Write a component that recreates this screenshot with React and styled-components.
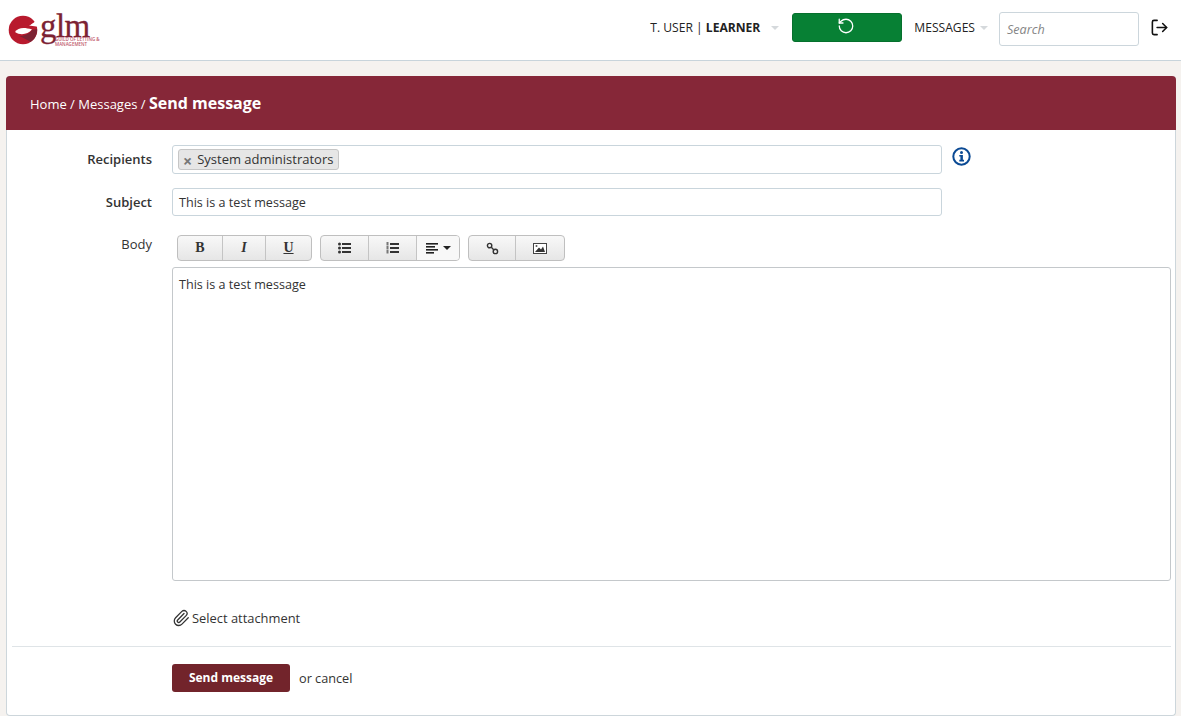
import React from 'react';
import styled, { createGlobalStyle } from 'styled-components';
import { RotateCcw, LogOut, Paperclip } from 'lucide-react';

const GlobalStyle = createGlobalStyle`
  html, body { margin: 0; padding: 0; height: 716px; overflow: hidden; background: #f5f2ef; }
  body { font-family: "Open Sans", "Liberation Sans", sans-serif; font-size: 13px; color: #333; }
`;

const Header = styled.header`
  height: 60px;
  box-sizing: content-box;
  background: #fff;
  border-bottom: 1px solid #c8d4db;
  display: flex;
  align-items: center;
  padding-right: 12px;
`;

const Logo = styled.div`
  display: flex;
  align-items: flex-start;
  margin-left: 8px;
  width: 92px;
  height: 30px;
`;

const LogoWords = styled.div`
  display: flex;
  flex-direction: column;
  margin-left: 2px;
  margin-top: -1px;
`;

const LogoName = styled.span`
  font-family: "Liberation Serif", serif;
  font-size: 33px;
  line-height: 24px;
  height: 24px;
  letter-spacing: -0.6px;
  font-weight: 400;
  -webkit-text-stroke: 0.3px #7c2233;
  color: #7c2233;
`;

const LogoSub = styled.span`
  font-size: 4.5px;
  line-height: 4.5px;
  white-space: pre;
  color: #c0586c;
  margin-left: 15px;
  font-weight: 600;
  margin-top: -1px;
`;

const HeaderRight = styled.div`
  margin-left: auto;
  display: flex;
  align-items: center;
  padding-bottom: 6px;
`;

const UserName = styled.span`
  font-size: 12.1px;
  color: #222;
  white-space: pre;
  & b { font-weight: 700; }
`;

const Caret = styled.span`
  width: 0;
  height: 0;
  border-left: 4px solid transparent;
  border-right: 4px solid transparent;
  border-top: 4px solid #d5d9dc;
  margin-left: ${p => p.$left}px;
  margin-top: 2px;
`;

const SyncButton = styled.div`
  width: 110px;
  height: 29px;
  margin-left: 13px;
  box-sizing: border-box;
  background: #078034;
  border: 1px solid #06702d;
  border-radius: 3px;
  display: flex;
  align-items: center;
  justify-content: center;
  color: #fff;
  & svg { margin-top: -2px; margin-right: 2px; }
`;

const MessagesLink = styled.span`
  font-size: 12.1px;
  color: #222;
  margin-left: 12px;
`;

const SearchBox = styled.div`
  width: 140px;
  height: 34px;
  box-sizing: border-box;
  margin-left: 11px;
  margin-top: 3px;
  border: 1px solid #ccd6dc;
  border-radius: 3px;
  padding: 8px 7px 7px;
  font-size: 12.6px;
  line-height: 17px;
  font-style: italic;
  color: #858585;
`;

const ExitIcon = styled(LogOut)`
  margin-left: 11px;
  color: #111;
`;

const Panel = styled.main`
  margin: 15px 5px 0 6px;
  height: 640px;
  box-sizing: border-box;
  background: #fff;
  border: 1px solid #cdd6db;
  border-top: none;
  border-radius: 4px;
`;

const TitleBar = styled.div`
  height: 54px;
  background: #862738;
  margin: 0 -1px;
  padding: 1px 0 0 24px;
  box-sizing: border-box;
  border-radius: 4px 4px 0 0;
  display: flex;
  align-items: center;
  color: #fff;
  font-size: 13px;
  white-space: pre;
  & strong { font-size: 16px; font-weight: 700; margin-bottom: 2px; }
`;

const Form = styled.div`
  padding: 15px 4px 0 5px;
`;

const Row = styled.div`
  display: flex;
  align-items: flex-start;
  margin-bottom: ${p => p.$gap}px;
`;

const Label = styled.label`
  width: 140px;
  text-align: right;
  margin-right: 20px;
  flex-shrink: 0;
  font-size: 13px;
  line-height: 18px;
  padding-top: ${p => p.$top}px;
  font-weight: ${p => (p.$bold ? 600 : 400)};
  color: #333;
`;

const Field = styled.div`
  width: 770px;
  height: ${p => p.$height}px;
  box-sizing: border-box;
  border: 1px solid #c9d5dc;
  border-radius: 3px;
  background: #fff;
  padding: 0 ${p => p.$pad}px;
  display: flex;
  align-items: center;
  font-size: 12.6px;
  color: #333;
`;

const Tag = styled.span`
  height: 21px;
  box-sizing: border-box;
  display: inline-flex;
  align-items: center;
  background: #e6e6e6;
  border: 1px solid #c6c6c6;
  border-radius: 3px;
  padding: 0 5px 2px 4px;
  font-size: 13px;
  color: #333;
`;

const TagClose = styled.span`
  font-size: 16px;
  font-weight: 700;
  color: #777;
  margin-right: 5px;
  line-height: 12px;
  margin-top: 4px;
`;

const InfoIcon = styled.svg`
  margin: 2px 0 0 10px;
`;

const BodyColumn = styled.div`
  flex: 1;
  min-width: 0;
`;

const Toolbar = styled.div`
  display: flex;
  gap: 8px;
  margin: 5px 0 6px 5px;
`;

const ToolGroup = styled.div`
  display: flex;
  height: 26px;
  box-sizing: border-box;
  border: 1px solid #bfbfbf;
  border-radius: 4px;
  background: linear-gradient(#f8f8f8, #e6e6e6);
  overflow: hidden;
`;

const ToolButton = styled.div`
  width: ${p => p.$width}px;
  display: flex;
  align-items: center;
  justify-content: center;
  color: #333;
  font-family: "Liberation Serif", serif;
  font-size: 14px;
  background: ${p => (p.$light ? '#f8f8f8' : 'transparent')};
  & + & { border-left: 1px solid #c4c4c4; }
`;

const ToolCaret = styled.span`
  width: 0;
  height: 0;
  border-left: 4px solid transparent;
  border-right: 4px solid transparent;
  border-top: 4px solid #222;
  margin-left: 4px;
`;

const Editor = styled.div`
  height: 314px;
  box-sizing: border-box;
  border: 1px solid #c4c8cb;
  border-radius: 3px;
  padding: 8px 6px;
  font-size: 12.6px;
  line-height: 18px;
  color: #333;
`;

const Attachment = styled.div`
  display: flex;
  align-items: center;
  margin: 27px 0 0 160px;
  height: 20px;
  font-size: 12.9px;
  color: #333;
  & svg { margin-right: 2px; }
`;

const Divider = styled.hr`
  border: none;
  border-top: 1px solid #dfe4e7;
  margin: 18px 0 17px 0;
`;

const Actions = styled.div`
  display: flex;
  align-items: center;
  margin-left: 160px;
`;

const SendButton = styled.div`
  width: 118px;
  height: 28px;
  background: #72242b;
  border-radius: 3px;
  color: #fff;
  font-size: 12px;
  font-weight: 700;
  display: flex;
  align-items: center;
  justify-content: center;
  padding-bottom: 1px;
  box-sizing: border-box;
`;

const CancelLink = styled.span`
  margin-left: 9px;
  font-size: 12.7px;
  color: #333;
`;

const LogoMark = () => (
  <svg width="30" height="30" viewBox="0 0 30 30">
    <circle cx="15" cy="15" r="14.3" fill="#b81a2e" />
    <path d="M21 10.5 L30.5 4.5 L31 12 Z" fill="#fff" />
    <path d="M19 3.5 C21.5 4 24 5 26 7 L21.5 10.5 C20 8.5 19 6 19 3.5 Z" fill="#b81a2e" />
    <path d="M7 17 C10 12.5 16 12 24 14.5 C20 19 13 21 7 17 Z" fill="#fff" />
    <path d="M11 21 C16 21 21 19 24 15 L29 14 C29.5 19 27 24 22.5 27 C19 24.5 15 22.5 11 21 Z" fill="#7c2233" />
  </svg>
);

const ListIcon = ({ numbered }) => (
  <svg width="13" height="12" viewBox="0 0 13 12" fill="#333">
    {[1, 5, 9].map(y => (
      <React.Fragment key={y}>
        <rect x="4" y={y} width="9" height="2" />
        {numbered
          ? <rect x="0.5" y={y - 1} width="2" height="3.5" fill="#777" />
          : <circle cx="1.5" cy={y + 1} r="1.5" />}
      </React.Fragment>
    ))}
  </svg>
);

const AlignIcon = () => (
  <svg width="13" height="11" viewBox="0 0 13 11" fill="#222">
    <rect y="0" width="12" height="1.6" />
    <rect y="3" width="9" height="1.6" />
    <rect y="6" width="12" height="1.6" />
    <rect y="9" width="8" height="1.6" />
  </svg>
);

const LinkIcon = () => (
  <svg width="13" height="13" viewBox="0 0 13 13" fill="none" stroke="#333" strokeWidth="1.4">
    <circle cx="3.6" cy="3.6" r="2.2" />
    <circle cx="9.4" cy="9.4" r="2.2" />
    <path d="M5.3 5.3 L7.7 7.7" />
  </svg>
);

const ImageIcon = () => (
  <svg width="14" height="11" viewBox="0 0 14 11">
    <rect x="0.5" y="0.5" width="13" height="10" fill="#fff" stroke="#444" />
    <path d="M2 9 L6 4.5 L8 6.5 L10 3.5 L12 9 Z" fill="#333" />
    <circle cx="3.5" cy="3" r="1" fill="#555" />
  </svg>
);

export default function App() {
  return (
    <>
      <GlobalStyle />
      <Header>
        <Logo>
          <LogoMark />
          <LogoWords>
            <LogoName>glm</LogoName>
            <LogoSub>{'GUILD OF LETTING &\nMANAGEMENT'}</LogoSub>
          </LogoWords>
        </Logo>
        <HeaderRight>
          <UserName>T. USER | <b>LEARNER</b></UserName>
          <Caret $left={11} />
          <SyncButton><RotateCcw size={18} strokeWidth={1.7} /></SyncButton>
          <MessagesLink>MESSAGES</MessagesLink>
          <Caret $left={5} />
          <SearchBox>Search</SearchBox>
          <ExitIcon size={19} strokeWidth={2} />
        </HeaderRight>
      </Header>
      <Panel>
        <TitleBar>Home / Messages / <strong>Send message</strong></TitleBar>
        <Form>
          <Row $gap={14}>
            <Label $bold $top={5}>Recipients</Label>
            <Field $height={29} $pad={5}>
              <Tag><TagClose>×</TagClose>System administrators</Tag>
            </Field>
            <InfoIcon width="19" height="19" viewBox="0 0 19 19">
              <circle cx="9.5" cy="9.5" r="8.2" fill="none" stroke="#0b4a94" strokeWidth="2" />
              <circle cx="9.5" cy="5.6" r="1.5" fill="#0b4a94" />
              <path d="M7.3 8 H10.9 V12.8 H12 V14.4 H7.3 V12.8 H8.4 V9.6 H7.3 Z" fill="#0b4a94" />
            </InfoIcon>
          </Row>
          <Row $gap={14}>
            <Label $bold $top={5}>Subject</Label>
            <Field $height={28} $pad={6}>This is a test message</Field>
          </Row>
          <Row $gap={0}>
            <Label $top={5}>Body</Label>
            <BodyColumn>
              <Toolbar>
                <ToolGroup>
                  <ToolButton $width={44}><b>B</b></ToolButton>
                  <ToolButton $width={42}><b><i>I</i></b></ToolButton>
                  <ToolButton $width={45}><b><u>U</u></b></ToolButton>
                </ToolGroup>
                <ToolGroup>
                  <ToolButton $width={47}><ListIcon /></ToolButton>
                  <ToolButton $width={47}><ListIcon numbered /></ToolButton>
                  <ToolButton $width={42} $light><AlignIcon /><ToolCaret /></ToolButton>
                </ToolGroup>
                <ToolGroup>
                  <ToolButton $width={46}><LinkIcon /></ToolButton>
                  <ToolButton $width={48}><ImageIcon /></ToolButton>
                </ToolGroup>
              </Toolbar>
              <Editor>This is a test message</Editor>
            </BodyColumn>
          </Row>
          <Attachment><Paperclip size={18} strokeWidth={1.7} />Select attachment</Attachment>
          <Divider />
          <Actions>
            <SendButton>Send message</SendButton>
            <CancelLink>or cancel</CancelLink>
          </Actions>
        </Form>
      </Panel>
    </>
  );
}
